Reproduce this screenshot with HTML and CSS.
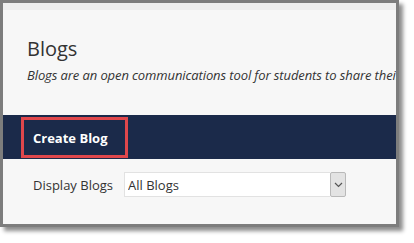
FILE: index.html
```html
<!DOCTYPE html>
<html lang="en">

<head>
  <meta charset="UTF-8">
  <title>Blogs</title>
  <link rel="stylesheet" href="styles.css">
</head>

<body>
  <div class="panel">
    <div class="top-strip"></div>

    <div class="page-header">
      <h1>Blogs</h1>
      <p class="subtitle">Blogs are an open communications tool for students to share their thoughts and learnings.</p>
    </div>

    <div class="action-bar">
      <a class="create-btn" href="#">Create Blog</a>
    </div>

    <div class="filter-row">
      <label for="displayBlogs">Display Blogs</label>
      <div class="select-box">
        <select id="displayBlogs">
          <option>All Blogs</option>
          <option>My Blogs</option>
        </select>
        <span class="select-btn">
          <svg width="9" height="6" viewBox="0 0 9 6">
            <path d="M1 1 L4.5 4.5 L8 1" fill="none" stroke="#555" stroke-width="1.2" />
          </svg>
        </span>
      </div>
    </div>
  </div>
</body>

</html>
```

FILE: styles.css
```css
html,
body {
  height: 243px;
}

body {
  font-family: "Open Sans", Arial, sans-serif;
  margin: 0;
  padding: 0;
  background-color: #fff;
  color: #333;
  overflow: hidden;
}

.panel {
  width: 399px;
  height: 227px;
  box-sizing: border-box;
  border: 3px solid #7d7d7d;
  background-color: #f7f7f7;
  box-shadow: 4px 4px 4px rgba(0, 0, 0, 0.45);
  overflow: hidden;
}

.top-strip {
  height: 7px;
  background-color: #eeeeee;
}

.page-header {
  padding: 27px 0 0 24px;
  height: 105px;
  box-sizing: border-box;
}

.page-header h1 {
  margin: 0;
  font-size: 20px;
  font-weight: normal;
  line-height: 24px;
  color: #333;
}

.subtitle {
  margin: 5px 0 0;
  font-size: 13px;
  font-style: italic;
  line-height: 18px;
  letter-spacing: -0.1px;
  white-space: nowrap;
  color: #333;
}

.action-bar {
  height: 44px;
  background-color: #1b2a4a;
  padding: 2px 0 0 18px;
  box-sizing: border-box;
}

.create-btn {
  display: flex;
  align-items: center;
  width: 107px;
  height: 41px;
  box-sizing: border-box;
  border: 3px solid #e0474c;
  padding-left: 9px;
  color: #fff;
  font-size: 13px;
  font-weight: bold;
  text-decoration: none;
}

.filter-row {
  display: flex;
  align-items: center;
  gap: 11px;
  padding: 13px 0 0 30px;
}

.filter-row label {
  font-size: 13px;
  line-height: 18px;
  color: #333;
}

.select-box {
  display: flex;
  width: 222px;
  height: 25px;
}

.select-box select {
  flex: 1;
  appearance: none;
  -webkit-appearance: none;
  border: 1px solid #e2e2e2;
  border-right: none;
  border-radius: 0;
  background-color: #fff;
  font-family: "Open Sans", Arial, sans-serif;
  font-size: 13px;
  color: #333;
  padding: 0 3px;
  outline: none;
}

.select-btn {
  width: 16px;
  display: flex;
  align-items: center;
  justify-content: center;
  background-color: #e3e3e3;
  border: 1px solid #b9b9b9;
  border-radius: 2px;
  box-sizing: border-box;
}
```
